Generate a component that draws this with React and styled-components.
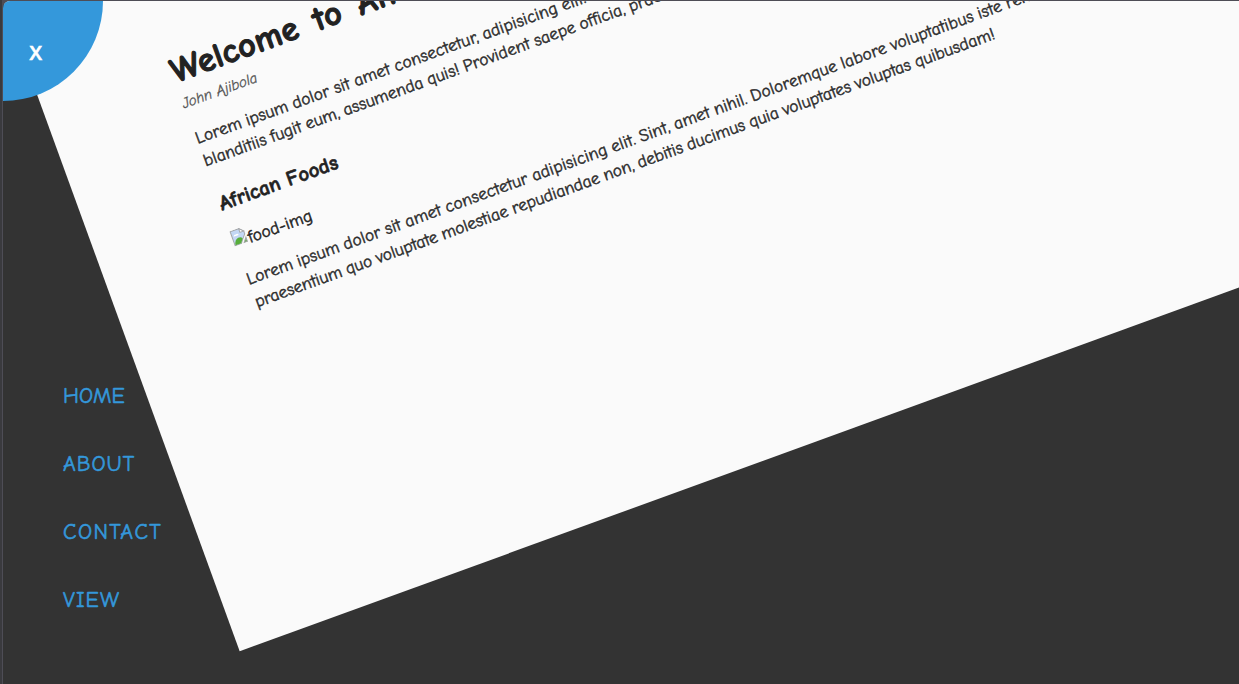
import React from 'react';
import styled, { createGlobalStyle } from 'styled-components';

const GlobalStyle = createGlobalStyle`
  *, *::before, *::after { box-sizing: border-box; }
  body {
    margin: 0;
    background: #4e4d56;
    font-family: 'Comic Neue', 'Comic Sans MS', Lato, sans-serif;
    font-variant-ligatures: none;
  }
`;

const Frame = styled.div`
  height: 100vh;
  padding: 1px 0 0 1px;
  background: #4e4d56;
  box-shadow: inset 2px 0 0 #3a3a3e;
  overflow: hidden;
  display: flex;
`;

const Viewport = styled.div`
  position: relative;
  flex: 1;
  display: grid;
  margin-left: 2px;
  border-top-left-radius: 7px;
  background: #333;
  overflow: hidden;
`;

const Toggle = styled.button`
  position: absolute;
  top: -100px;
  left: -100px;
  width: 200px;
  height: 200px;
  padding: 0 61px 35px 0;
  display: flex;
  align-items: flex-end;
  justify-content: flex-end;
  border: 0;
  border-radius: 50%;
  background: #3498db;
  color: #fff;
  font: 600 20px/27px 'Open Sans', sans-serif;
  -webkit-text-stroke: 0.6px currentColor;
`;

const Navigation = styled.nav`
  grid-area: 1 / 1;
  align-self: end;
  justify-self: start;
  display: flex;
  flex-direction: column;
  gap: 40px;
  padding: 0 0 79px 60px;
`;

const NavLink = styled.a`
  color: #3498db;
  font-size: 22px;
  line-height: 28px;
  letter-spacing: ${(p) => p.$tracking}px;
  -webkit-text-stroke: 0.55px currentColor;
`;

const Page = styled.main`
  grid-area: 1 / 1;
  width: 1400px;
  height: 692px;
  padding: 101.5px 0 0 134px;
  display: flex;
  flex-direction: column;
  align-items: flex-start;
  background: #fafafa;
  color: #222;
  transform: rotate(-20deg);
  transform-origin: top left;
  white-space: nowrap;
`;

const Title = styled.h1`
  margin: 0 0 0.5px;
  font-size: 34.5px;
  line-height: 46px;
  font-weight: 700;
  letter-spacing: 0.4px;
  word-spacing: 4.5px;
  -webkit-text-stroke: 1.1px currentColor;
`;

const Author = styled.small`
  margin-left: -0.8px;
  font-size: 15px;
  line-height: 20px;
  font-style: italic;
  color: #555;
  -webkit-text-stroke: 0.3px currentColor;
`;

const Paragraph = styled.p`
  margin: ${(p) => p.$gap}px 0 0;
  color: #2c2c2c;
  font-size: 17.5px;
  line-height: 23.9px;
  word-spacing: -1px;
  -webkit-text-stroke: 0.45px currentColor;
`;

const Line = styled.span`
  display: block;
  letter-spacing: ${(p) => p.$tracking}px;
`;

const Subtitle = styled.h3`
  margin: 20px 0 0;
  font-size: 21px;
  line-height: 26px;
  font-weight: 700;
  -webkit-text-stroke: 0.6px currentColor;
`;

const MissingImage = styled.div`
  display: flex;
  align-items: flex-start;
  gap: 0.6px;
  margin: 16.4px 0 0 -1px;
  font-size: 17.5px;
  line-height: 24px;
  -webkit-text-stroke: 0.45px currentColor;
`;

const BrokenIcon = () => (
  <svg width="16" height="16" viewBox="0 0 16 16">
    <path d="M1.5 .5H10.5L14.5 4.5V7.5L11 11.5L8 15.5H1.5Z" fill="#c3d7f5" stroke="#a5a7aa" />
    <path d="M3 6.5Q4 4 6 5Q8 4 8.5 6.5Z" fill="#fff" />
    <path d="M2 15Q3 9.5 7 9Q10 8.5 11 11L8 15Z" fill="#58ad3b" />
    <path d="M10.5 .5V4.5H14.5Z" fill="#fff" stroke="#a5a7aa" />
    <path d="M11 15.5L14.5 11V15.5Z" fill="#68ad50" stroke="#a5a7aa" />
  </svg>
);

const links = [
  ['HOME', 0],
  ['ABOUT', 1],
  ['CONTACT', 1.4],
  ['VIEW', 1.1],
];

export default function App() {
  return (
    <Frame>
      <GlobalStyle />
      <Viewport>
        <Navigation>
          {links.map(([label, tracking]) => (
            <NavLink key={label} $tracking={tracking}>{label}</NavLink>
          ))}
        </Navigation>
        <Page>
          <Title>Welcome to Africa</Title>
          <Author>John Ajibola</Author>
          <Paragraph $gap={16.1}>
            <Line $tracking={0.13}>Lorem ipsum dolor sit amet consectetur, adipisicing elit.</Line>
            <Line $tracking={0.06}>blanditiis fugit eum, assumenda quis! Provident saepe officia, praesentium</Line>
          </Paragraph>
          <Subtitle>African Foods</Subtitle>
          <MissingImage><BrokenIcon />food-img</MissingImage>
          <Paragraph $gap={16}>
            <Line $tracking={0.12}>Lorem ipsum dolor sit amet consectetur adipisicing elit. Sint, amet nihil. Doloremque labore voluptatibus iste rem</Line>
            <Line $tracking={-0.01}>praesentium quo voluptate molestiae repudiandae non, debitis ducimus quia voluptates voluptas quibusdam!</Line>
          </Paragraph>
        </Page>
        <Toggle>X</Toggle>
      </Viewport>
    </Frame>
  );
}
